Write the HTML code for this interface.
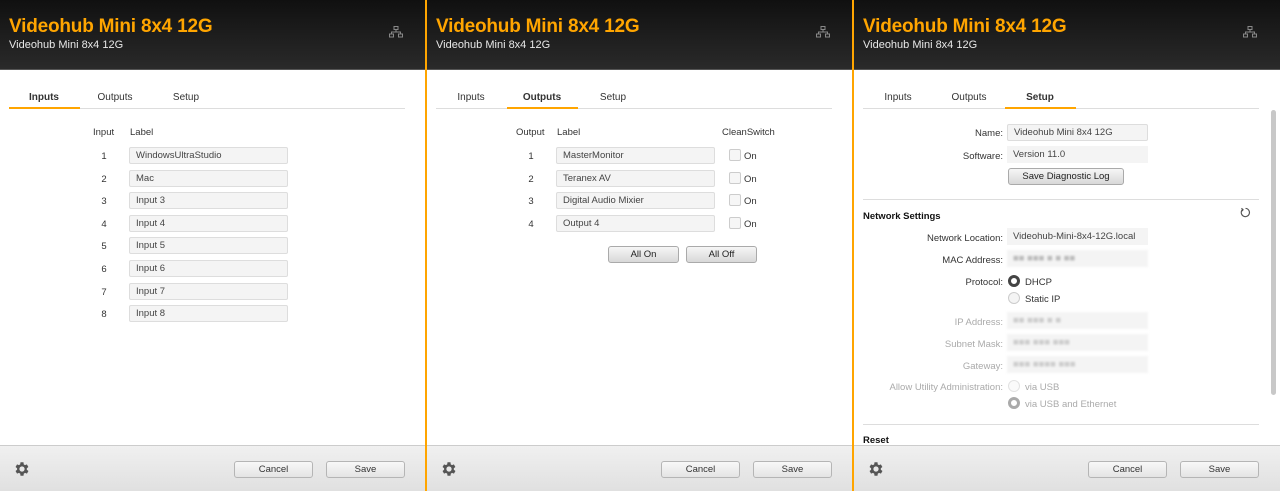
<!DOCTYPE html>
<html><head><meta charset="utf-8"><style>
*{margin:0;padding:0;box-sizing:border-box}
body{width:1280px;height:491px;overflow:hidden;background:#fff;font-family:"Liberation Sans",sans-serif;font-size:9.5px;color:#333;position:relative}
.p{position:absolute;top:0;width:426px;height:491px;overflow:hidden;background:#fff}
.a{position:absolute;white-space:nowrap}
.hd{position:absolute;left:0;top:0;width:100%;height:70px;background:linear-gradient(#101010,#2a2a2a);border-bottom:1px solid #555}
.t1{left:9px;top:16px;font-size:19px;color:#ffa500;font-weight:bold;letter-spacing:-.2px}
.t2{left:9px;top:39px;font-size:11px;color:#e8e8e8}
.net{position:absolute;left:389px;top:26px}
.tab{top:92px;font-size:10px;color:#333;text-align:center;width:70px}
.tl{position:absolute;left:9px;top:108px;width:396px;height:1px;background:#ddd}
.tu{position:absolute;top:107px;width:71px;height:2px;background:#ffa500}
.f{position:absolute;height:17px;background:#f4f4f4;border:1px solid #ddd;border-radius:2px;padding-left:6px;line-height:16px;font-size:9.5px;color:#444}
.f2{position:absolute;height:17px;background:#f4f4f4;padding-left:6px;line-height:18px;font-size:9.5px;color:#444}
.n{width:20px;text-align:center}
.b{position:absolute;height:17px;border:1px solid #aaa;border-radius:3px;background:linear-gradient(#f6f6f6,#d8d8d8);text-align:center;line-height:15px;font-size:9.5px;color:#222}
.ft{position:absolute;left:0;top:445px;width:100%;height:46px;background:linear-gradient(#f0f0f0,#e0e0e0);border-top:1px solid #ccc}
.fb{position:absolute;top:15px;height:17px;width:79px;border:1px solid #b5b5b5;border-radius:3px;background:linear-gradient(#f8f8f8,#e4e4e4);text-align:center;line-height:15px;font-size:9.5px;color:#333}
.gear{position:absolute;left:13px;top:14px}
.cb{position:absolute;width:12px;height:12px;border:1px solid #ccc;border-radius:2px;background:#f6f6f6}
.lb{width:140px;text-align:right}
.rd{position:absolute;width:12px;height:12px;border-radius:50%;border:1px solid #ccc;background:#f4f4f4}
.ob{position:absolute;width:2px;top:0;height:491px;background:#ffa500}
</style></head><body>

<!-- Panel 1 -->
<div class="p" style="left:0">
<div class="hd"><div class="a t1">Videohub Mini 8x4 12G</div><div class="a t2">Videohub Mini 8x4 12G</div><svg class="net" width="14" height="12" viewBox="0 0 14 12" fill="none" stroke="#888" stroke-width="1"><rect x="5" y="0.5" width="4" height="3"/><rect x="0.5" y="8" width="4" height="3"/><rect x="9.5" y="8" width="4" height="3"/><path d="M7 3.5V6M2.5 8V6h9v2"/></svg></div>
<div class="a tab" style="left:9px;font-weight:bold">Inputs</div>
<div class="a tab" style="left:80px">Outputs</div>
<div class="a tab" style="left:151px">Setup</div>
<div class="tl"></div><div class="tu" style="left:9px"></div>
<div class="a" style="left:93px;top:127px">Input</div><div class="a" style="left:130px;top:127px">Label</div>
<div class="a n" style="left:94px;top:151px">1</div><div class="f" style="left:129px;top:147px;width:159px">WindowsUltraStudio</div>
<div class="a n" style="left:94px;top:174px">2</div><div class="f" style="left:129px;top:170px;width:159px">Mac</div>
<div class="a n" style="left:94px;top:196px">3</div><div class="f" style="left:129px;top:192px;width:159px">Input 3</div>
<div class="a n" style="left:94px;top:219px">4</div><div class="f" style="left:129px;top:215px;width:159px">Input 4</div>
<div class="a n" style="left:94px;top:241px">5</div><div class="f" style="left:129px;top:237px;width:159px">Input 5</div>
<div class="a n" style="left:94px;top:264px">6</div><div class="f" style="left:129px;top:260px;width:159px">Input 6</div>
<div class="a n" style="left:94px;top:287px">7</div><div class="f" style="left:129px;top:283px;width:159px">Input 7</div>
<div class="a n" style="left:94px;top:309px">8</div><div class="f" style="left:129px;top:305px;width:159px">Input 8</div>
<div class="ft"><svg class="gear" width="18" height="18" viewBox="0 0 24 24"><path fill="#555" d="M19.4 13a7.5 7.5 0 000-2l2.1-1.6-2-3.5-2.5 1a7 7 0 00-1.7-1L15 3h-4l-.4 2.9a7 7 0 00-1.7 1l-2.5-1-2 3.5L6.5 11a7.5 7.5 0 000 2l-2.1 1.6 2 3.5 2.5-1a7 7 0 001.7 1L11 21h4l.4-2.9a7 7 0 001.7-1l2.5 1 2-3.5zM13 15.5a3.5 3.5 0 110-7 3.5 3.5 0 010 7z" transform="translate(-1 0)"/></svg>
<div class="fb" style="left:234px">Cancel</div><div class="fb" style="left:326px">Save</div></div>
</div>

<!-- Panel 2 -->
<div class="p" style="left:427px">
<div class="hd"><div class="a t1">Videohub Mini 8x4 12G</div><div class="a t2">Videohub Mini 8x4 12G</div><svg class="net" width="14" height="12" viewBox="0 0 14 12" fill="none" stroke="#888" stroke-width="1"><rect x="5" y="0.5" width="4" height="3"/><rect x="0.5" y="8" width="4" height="3"/><rect x="9.5" y="8" width="4" height="3"/><path d="M7 3.5V6M2.5 8V6h9v2"/></svg></div>
<div class="a tab" style="left:9px">Inputs</div>
<div class="a tab" style="left:80px;font-weight:bold">Outputs</div>
<div class="a tab" style="left:151px">Setup</div>
<div class="tl"></div><div class="tu" style="left:80px"></div>
<div class="a" style="left:89px;top:127px">Output</div><div class="a" style="left:130px;top:127px">Label</div><div class="a" style="left:295px;top:127px">CleanSwitch</div>
<div class="a n" style="left:94px;top:151px">1</div><div class="f" style="left:129px;top:147px;width:159px">MasterMonitor</div><div class="cb" style="left:302px;top:149px"></div><div class="a" style="left:317px;top:151px">On</div>
<div class="a n" style="left:94px;top:174px">2</div><div class="f" style="left:129px;top:170px;width:159px">Teranex AV</div><div class="cb" style="left:302px;top:172px"></div><div class="a" style="left:317px;top:174px">On</div>
<div class="a n" style="left:94px;top:196px">3</div><div class="f" style="left:129px;top:192px;width:159px">Digital Audio Mixier</div><div class="cb" style="left:302px;top:194px"></div><div class="a" style="left:317px;top:196px">On</div>
<div class="a n" style="left:94px;top:219px">4</div><div class="f" style="left:129px;top:215px;width:159px">Output 4</div><div class="cb" style="left:302px;top:217px"></div><div class="a" style="left:317px;top:219px">On</div>
<div class="b" style="left:181px;top:246px;width:71px">All On</div><div class="b" style="left:259px;top:246px;width:71px">All Off</div>
<div class="ft"><svg class="gear" width="18" height="18" viewBox="0 0 24 24"><path fill="#555" d="M19.4 13a7.5 7.5 0 000-2l2.1-1.6-2-3.5-2.5 1a7 7 0 00-1.7-1L15 3h-4l-.4 2.9a7 7 0 00-1.7 1l-2.5-1-2 3.5L6.5 11a7.5 7.5 0 000 2l-2.1 1.6 2 3.5 2.5-1a7 7 0 001.7 1L11 21h4l.4-2.9a7 7 0 001.7-1l2.5 1 2-3.5zM13 15.5a3.5 3.5 0 110-7 3.5 3.5 0 010 7z" transform="translate(-1 0)"/></svg>
<div class="fb" style="left:234px">Cancel</div><div class="fb" style="left:326px">Save</div></div>
</div>

<!-- Panel 3 -->
<div class="p" style="left:854px">
<div class="hd"><div class="a t1">Videohub Mini 8x4 12G</div><div class="a t2">Videohub Mini 8x4 12G</div><svg class="net" width="14" height="12" viewBox="0 0 14 12" fill="none" stroke="#888" stroke-width="1"><rect x="5" y="0.5" width="4" height="3"/><rect x="0.5" y="8" width="4" height="3"/><rect x="9.5" y="8" width="4" height="3"/><path d="M7 3.5V6M2.5 8V6h9v2"/></svg></div>
<div class="a tab" style="left:9px">Inputs</div>
<div class="a tab" style="left:80px">Outputs</div>
<div class="a tab" style="left:151px;font-weight:bold">Setup</div>
<div class="tl"></div><div class="tu" style="left:151px"></div>
<div class="a lb" style="left:9px;top:128px">Name:</div><div class="f" style="left:153px;top:124px;width:141px">Videohub Mini 8x4 12G</div>
<div class="a lb" style="left:9px;top:151px">Software:</div><div class="f2" style="left:153px;top:146px;width:141px">Version 11.0</div>
<div class="b" style="left:154px;top:168px;width:116px">Save Diagnostic Log</div>
<div style="position:absolute;left:9px;top:199px;width:396px;height:1px;background:#ddd"></div>
<div class="a" style="left:9px;top:211px;font-weight:bold;color:#111">Network Settings</div>
<svg style="position:absolute;left:386px;top:207px" width="11" height="11" viewBox="0 0 12 12" fill="none" stroke="#555" stroke-width="1.2"><path d="M3 2.5A4.5 4.5 0 1 0 6 1.5"/><path d="M1.5 1.5L3.3 2.7 2.6 4.6" /></svg>
<div class="a lb" style="left:9px;top:233px">Network Location:</div><div class="f2" style="left:153px;top:228px;width:141px">Videohub-Mini-8x4-12G.local</div>
<div class="a lb" style="left:9px;top:255px">MAC Address:</div><div class="f2" style="left:153px;top:250px;width:141px;color:#bbb;filter:blur(1px)">■■ ■■■ ■ ■ ■■</div>
<div class="a lb" style="left:9px;top:277px">Protocol:</div>
<div class="rd" style="left:154px;top:275px;border:3px solid #444;background:#fff"></div><div class="a" style="left:171px;top:277px">DHCP</div>
<div class="rd" style="left:154px;top:292px"></div><div class="a" style="left:171px;top:294px">Static IP</div>
<div class="a lb" style="left:9px;top:317px;color:#aaa">IP Address:</div><div class="f2" style="left:153px;top:312px;width:141px;color:#ccc;filter:blur(1px)">■■ ■■■ ■ ■</div>
<div class="a lb" style="left:9px;top:339px;color:#aaa">Subnet Mask:</div><div class="f2" style="left:153px;top:334px;width:141px;color:#ccc;filter:blur(1px)">■■■ ■■■ ■■■</div>
<div class="a lb" style="left:9px;top:361px;color:#aaa">Gateway:</div><div class="f2" style="left:153px;top:356px;width:141px;color:#ccc;filter:blur(1px)">■■■ ■■■■ ■■■</div>
<div class="a lb" style="left:9px;top:382px;color:#aaa">Allow Utility Administration:</div>
<div class="rd" style="left:154px;top:380px;border-color:#e2e2e2;background:#fafafa"></div><div class="a" style="left:171px;top:382px;color:#aaa">via USB</div>
<div class="rd" style="left:154px;top:397px;border:3px solid #aaa;background:#fff"></div><div class="a" style="left:171px;top:399px;color:#aaa">via USB and Ethernet</div>
<div style="position:absolute;left:9px;top:424px;width:396px;height:1px;background:#ddd"></div>
<div class="a" style="left:9px;top:435px;font-weight:bold;color:#111">Reset</div>
<div style="position:absolute;left:417px;top:110px;width:5px;height:285px;background:#c8c8c8;border-radius:3px"></div>
<div class="ft"><svg class="gear" width="18" height="18" viewBox="0 0 24 24"><path fill="#555" d="M19.4 13a7.5 7.5 0 000-2l2.1-1.6-2-3.5-2.5 1a7 7 0 00-1.7-1L15 3h-4l-.4 2.9a7 7 0 00-1.7 1l-2.5-1-2 3.5L6.5 11a7.5 7.5 0 000 2l-2.1 1.6 2 3.5 2.5-1a7 7 0 001.7 1L11 21h4l.4-2.9a7 7 0 001.7-1l2.5 1 2-3.5zM13 15.5a3.5 3.5 0 110-7 3.5 3.5 0 010 7z" transform="translate(-1 0)"/></svg>
<div class="fb" style="left:234px">Cancel</div><div class="fb" style="left:326px">Save</div></div>
</div>

<div class="ob" style="left:425px"></div>
<div class="ob" style="left:852px"></div>
</body></html>
